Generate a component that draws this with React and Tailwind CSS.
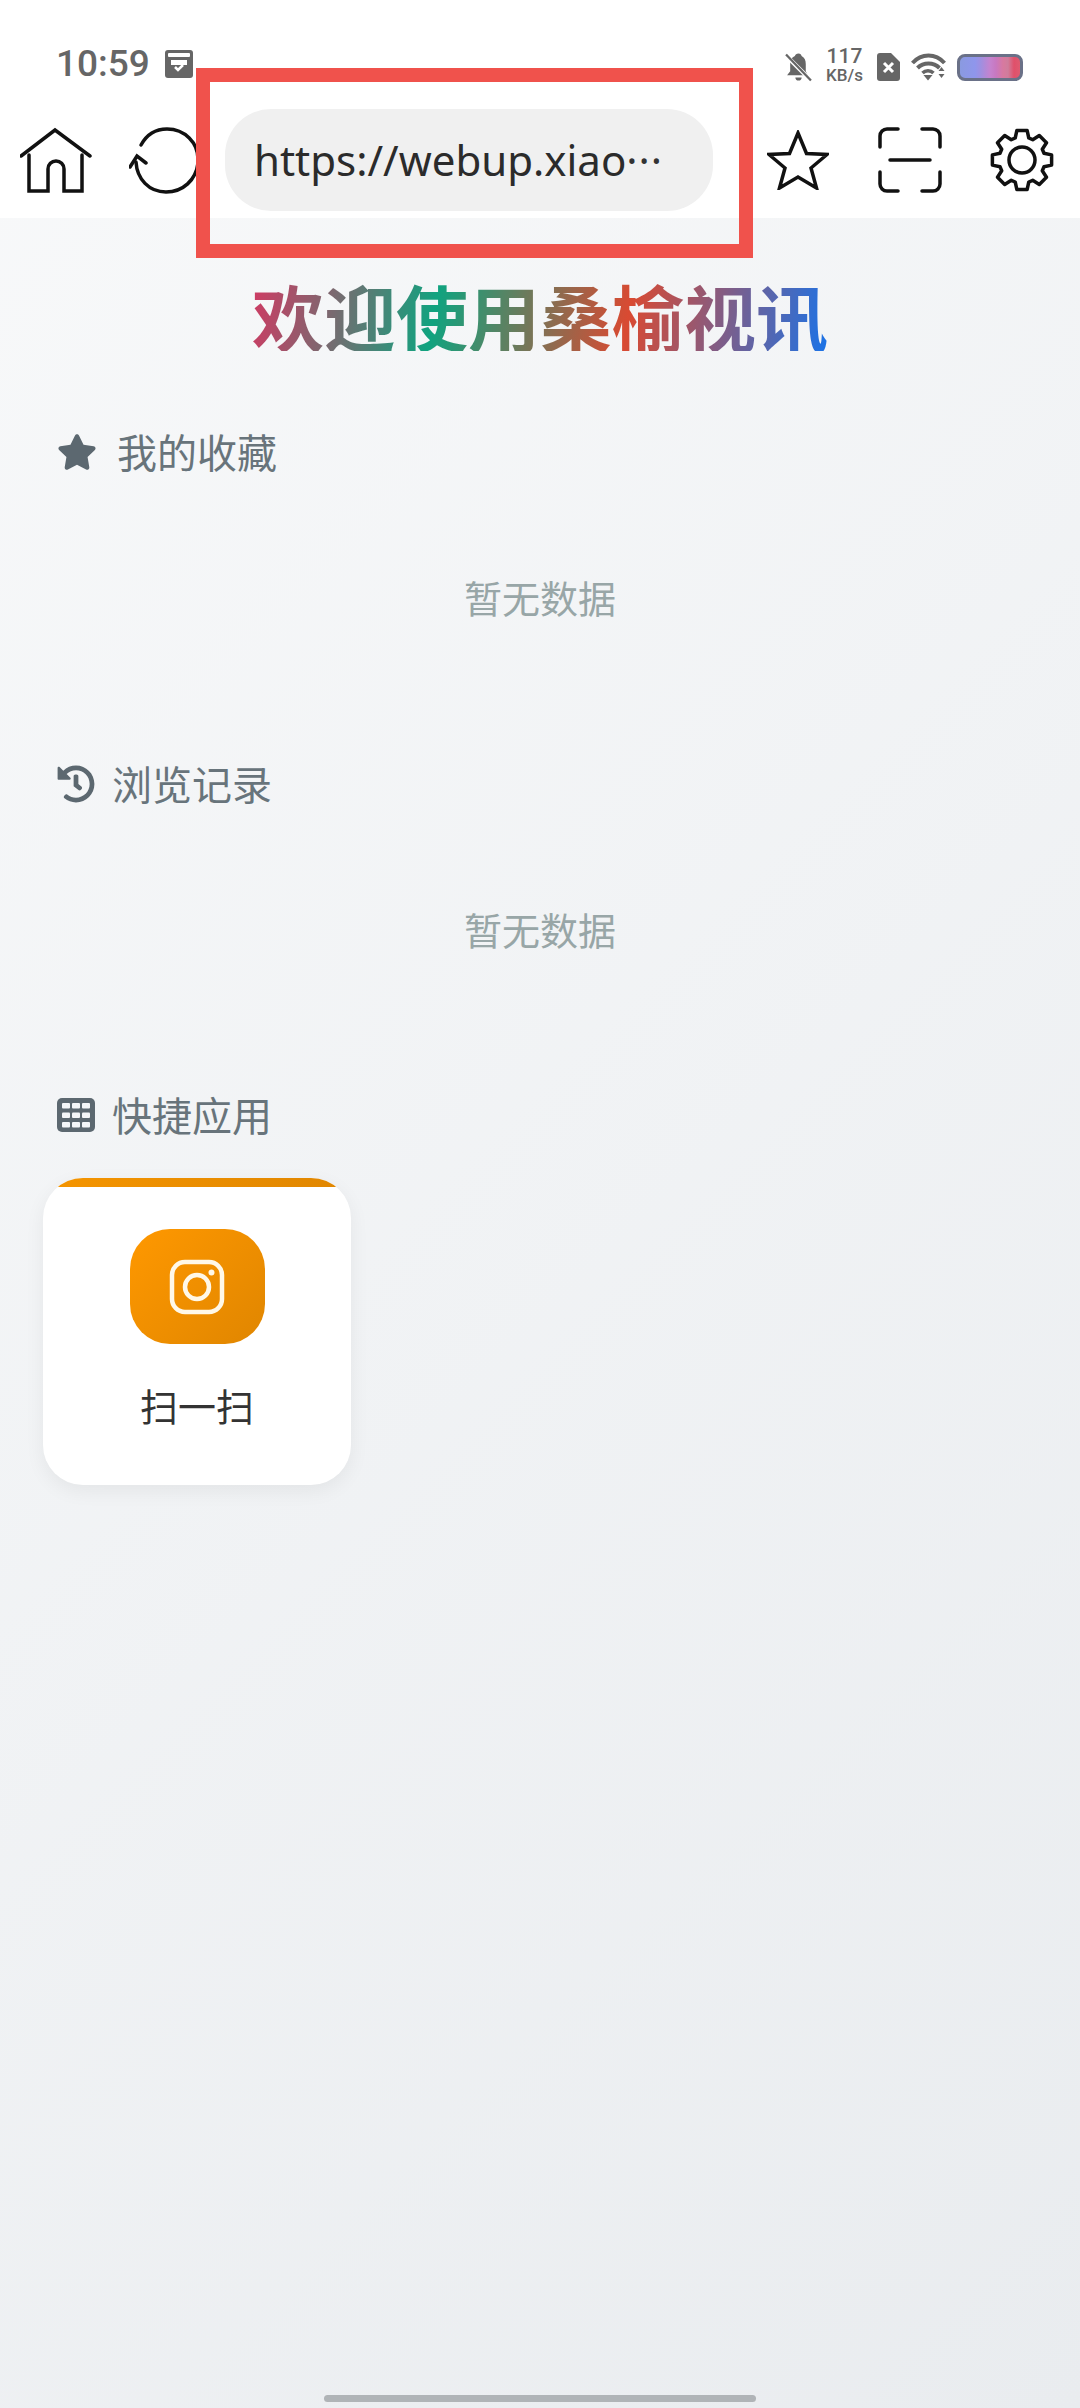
import React from 'react';
import { FaStar, FaHistory } from 'react-icons/fa';

const cjk = "font-['Noto_Sans_CJK_SC','Noto_Sans',sans-serif]";

// 8 blunt teeth, one pointing straight up
const gearPath = () => {
  const pts = [];
  for (let i = 0; i < 8; i++) {
    const a = (i * Math.PI) / 4 - Math.PI / 2;
    [[23, -0.3], [30, -0.17], [30, 0.17], [23, 0.3]].forEach(([r, d]) => {
      pts.push(`${(32 + r * Math.cos(a + d)).toFixed(1)} ${(32 + r * Math.sin(a + d)).toFixed(1)}`);
    });
  }
  return `M${pts.join('L')}z`;
};

const TableIcon = () => (
  <svg width="38" height="34" viewBox="0 0 38 34" className="block">
    <rect width="38" height="34" rx="5" fill="currentColor" />
    {[5, 14.5, 24].map((y) =>
      [5, 15, 25].map((x) => <rect key={`${x}-${y}`} x={x} y={y} width="8" height="5.500" rx="1" fill="#f4f6f8" />)
    )}
  </svg>
);

const SectionHead = ({ icon, title, gap }) => (
  <div className={`flex h-[40px] items-center pl-[57px] text-[40px] leading-[40px] text-[#68747b] ${gap}`}>
    <span className="translate-y-[1px] text-[#5c6870]">{icon}</span>
    <span>{title}</span>
  </div>
);

const Empty = () => (
  <div className="py-[106px] text-center text-[38px] leading-[40px] text-[#98a6a7]">暂无数据</div>
);

const StatusBar = () => (
  <div className="flex h-[109px] items-start justify-between pl-[56px] pr-[57px] pt-[46px] text-[#666666]">
    <div className="flex items-center gap-[15px]">
      <span className="font-['Roboto',sans-serif] text-[37px] font-medium leading-[36px]">10:59</span>
      <svg width="28" height="28" viewBox="0 0 28 28">
        <rect x="0" y="0" width="28" height="28" rx="3" fill="#666666" />
        <rect x="3" y="3" width="22" height="4" rx="1" fill="#ffffff" />
        <path d="M6 10h16v5H6z" fill="#ffffff" />
        <path d="M10 17l3 3 5-5" fill="none" stroke="#ffffff" strokeWidth="2.5" />
      </svg>
    </div>
    <div className="flex items-center">
      <svg width="27" height="30" viewBox="0 0 26 28" className="mt-[3px]">
        <path d="M13 1c-2 0-3 1-3.500 2.500C6 5 5 8 5 11v7l-3 4h20L20 18v-7c0-3-1-6-4-7.500C15.500 2 15 1 13 1z" fill="#666666" />
        <path d="M10 24h6a3 3 0 0 1-6 0z" fill="#666666" />
        <path d="M1 3l24 24" stroke="#ffffff" strokeWidth="4" />
        <path d="M1 2l24 25" stroke="#666666" strokeWidth="2.200" />
      </svg>
      <div className="ml-[14px] flex w-[37px] flex-col items-center font-['Roboto',sans-serif]">
        <span className="text-[21px] font-medium leading-[21px]">117</span>
        <span className="text-[17px] font-medium leading-[17px]">KB/s</span>
      </div>
      <svg width="23" height="28" viewBox="0 0 23 28" className="ml-[14px] mt-[4px]">
        <path d="M3 0h11l9 9v16a3 3 0 0 1-3 3H3a3 3 0 0 1-3-3V3a3 3 0 0 1 3-3z" fill="#666666" />
        <path d="M7 10l9 9M16 10l-9 9" stroke="#ffffff" strokeWidth="3" />
      </svg>
      <svg width="35" height="28" viewBox="0 0 34 28" className="ml-[11px] mt-[4px]">
        <path d="M1 10c9-10 23-10 32 0" fill="none" stroke="#666666" strokeWidth="4" />
        <path d="M6 15c6-6 16-6 22 0" fill="none" stroke="#666666" strokeWidth="4" />
        <path d="M11 20c3-3 8-3 11 0" fill="none" stroke="#666666" strokeWidth="3.500" />
        <path d="M12 22h9l-4.500 5.500z" fill="#666666" />
        <path d="M27 18l3-4 3 4zM27 21h6l-3 4z" fill="#666666" />
      </svg>
      <div className="ml-[11px] mt-[4px] h-[27px] w-[66px] rounded-[8px] border-[3px] border-[#6a7188] bg-[linear-gradient(90deg,#8a9ae0_0%,#8f96ec_25%,#a08fe0_35%,#c583cf_50%,#c878c0_60%,#d8799f_72%,#cf7d9c_80%,#e0506a_90%,#de5a70_100%)]" />
    </div>
  </div>
);

const Toolbar = () => (
  <div className="flex h-[109px] items-start pb-[7px] pl-[20px]">
    {/* home */}
    <svg width="72" height="68" viewBox="0 0 72 68" className="mt-[18px]" fill="none" stroke="#111111" strokeWidth="3.500" strokeLinecap="round">
      <path d="M1 29L35 3l35 26" />
      <path d="M9 28v36h19V42a8 8 0 0 1 16 0v22h18V28" />
    </svg>
    {/* refresh, runs under the red box */}
    <svg width="72" height="68" viewBox="0 0 72 68" className="ml-[37px] mt-[18px]" fill="none" stroke="#111111" strokeWidth="3.500" strokeLinecap="round">
      <path d="M12 18C18 7 28 2 38 2c18 0 31 14 31 30" />
      <path d="M69 36c-2 17-15 29-32 29-17 0-29-13-30-30" />
      <path d="M1 40l7-11 9 7" />
    </svg>
    <div className="ml-[24px] flex h-[102px] w-[488px] items-center overflow-hidden rounded-[46px] bg-[#f0f0f0] pl-[29px] font-['Noto_Sans',sans-serif] text-[42px] leading-[102px] text-[#2b2b2b]">
      https://webup.xiao<span className="tracking-[1px] text-[#333333]">···</span>
    </div>
    <svg width="62" height="60" viewBox="0 0 62 60" className="ml-[54px] mt-[21px]" fill="none" stroke="#111111" strokeWidth="3.500">
      <path d="M31 3l8.500 20.500L60 24.500l-16 13.500 5.500 20L31 47 12.500 58l5.500-20L2 24.500l20.500-1z" />
    </svg>
    <svg width="64" height="66" viewBox="0 0 64 66" className="ml-[49px] mt-[18px]" fill="none" stroke="#111111" strokeWidth="3.500" strokeLinecap="round">
      <path d="M20 2H9a7 7 0 0 0-7 7v11" />
      <path d="M44 2h11a7 7 0 0 1 7 7v11" />
      <path d="M2 45v12a7 7 0 0 0 7 7h11" />
      <path d="M62 45v12a7 7 0 0 1-7 7H44" />
      <path d="M12 33h40" />
    </svg>
    <svg width="64" height="64" viewBox="0 0 64 64" className="ml-[48px] mt-[19px]" fill="none" stroke="#111111" strokeWidth="3.500" strokeLinejoin="round">
      <path d={gearPath()} />
      <circle cx="32" cy="32" r="13" />
    </svg>
  </div>
);

const ShortcutCard = () => (
  <div className="ml-[43px] mt-[44px] h-[307px] w-[308px] overflow-hidden rounded-[40px] bg-white shadow-[0_6px_20px_rgba(0,0,0,0.06)]">
    <div className="h-[9px] bg-[linear-gradient(90deg,#f59500,#e08600)]" />
    <div className="flex flex-col items-center pt-[42px]">
      <div className="flex h-[115px] w-[135px] items-center justify-center rounded-[40px] bg-[linear-gradient(135deg,#ff9800,#e08600)]">
        <svg width="56" height="56" viewBox="0 0 56 56" fill="none" stroke="#fff8e8" strokeWidth="4.500">
          <rect x="3" y="3" width="50" height="50" rx="13" />
          <circle cx="28" cy="28" r="12" />
          <circle cx="42.500" cy="13.500" r="3" fill="#fff8e8" stroke="none" />
        </svg>
      </div>
      <div className="mt-[40px] text-[38px] leading-[42px] text-[#333333]">扫一扫</div>
    </div>
  </div>
);

export default function App() {
  return (
    <div className={`relative h-[2408px] w-[1080px] overflow-hidden bg-[linear-gradient(135deg,#f8f9fa,#e9ecef)] ${cjk}`}>
      <div className="bg-white">
        <StatusBar />
        <Toolbar />
      </div>

      <h1 className="mx-auto mt-[61px] w-fit bg-[linear-gradient(100deg,#d13a63_0%,#10a37f_32%,#d94a32_65%,#1a73e8_100%)] bg-clip-text text-[72px] font-bold leading-[72px] text-transparent">
        欢迎使用桑榆视讯
      </h1>

      <div className="mt-[80px] flex flex-col gap-[39.500px]">
        <section>
          <SectionHead icon={<FaStar size={40} />} title="我的收藏" gap="gap-[20px]" />
          <Empty />
        </section>
        <section>
          <SectionHead icon={<FaHistory size={38} />} title="浏览记录" gap="gap-[17px]" />
          <Empty />
        </section>
        <section>
          <SectionHead icon={<TableIcon />} title="快捷应用" gap="gap-[17px]" />
          <ShortcutCard />
        </section>
      </div>

      {/* red annotation box over the address bar */}
      <div className="absolute left-[196px] top-[68px] h-[190px] w-[557px] border-[14px] border-[#f0524c]" />

      <div className="absolute bottom-[6px] left-[324px] h-[7px] w-[432px] rounded-full bg-[#b0b4b7]" />
    </div>
  );
}
